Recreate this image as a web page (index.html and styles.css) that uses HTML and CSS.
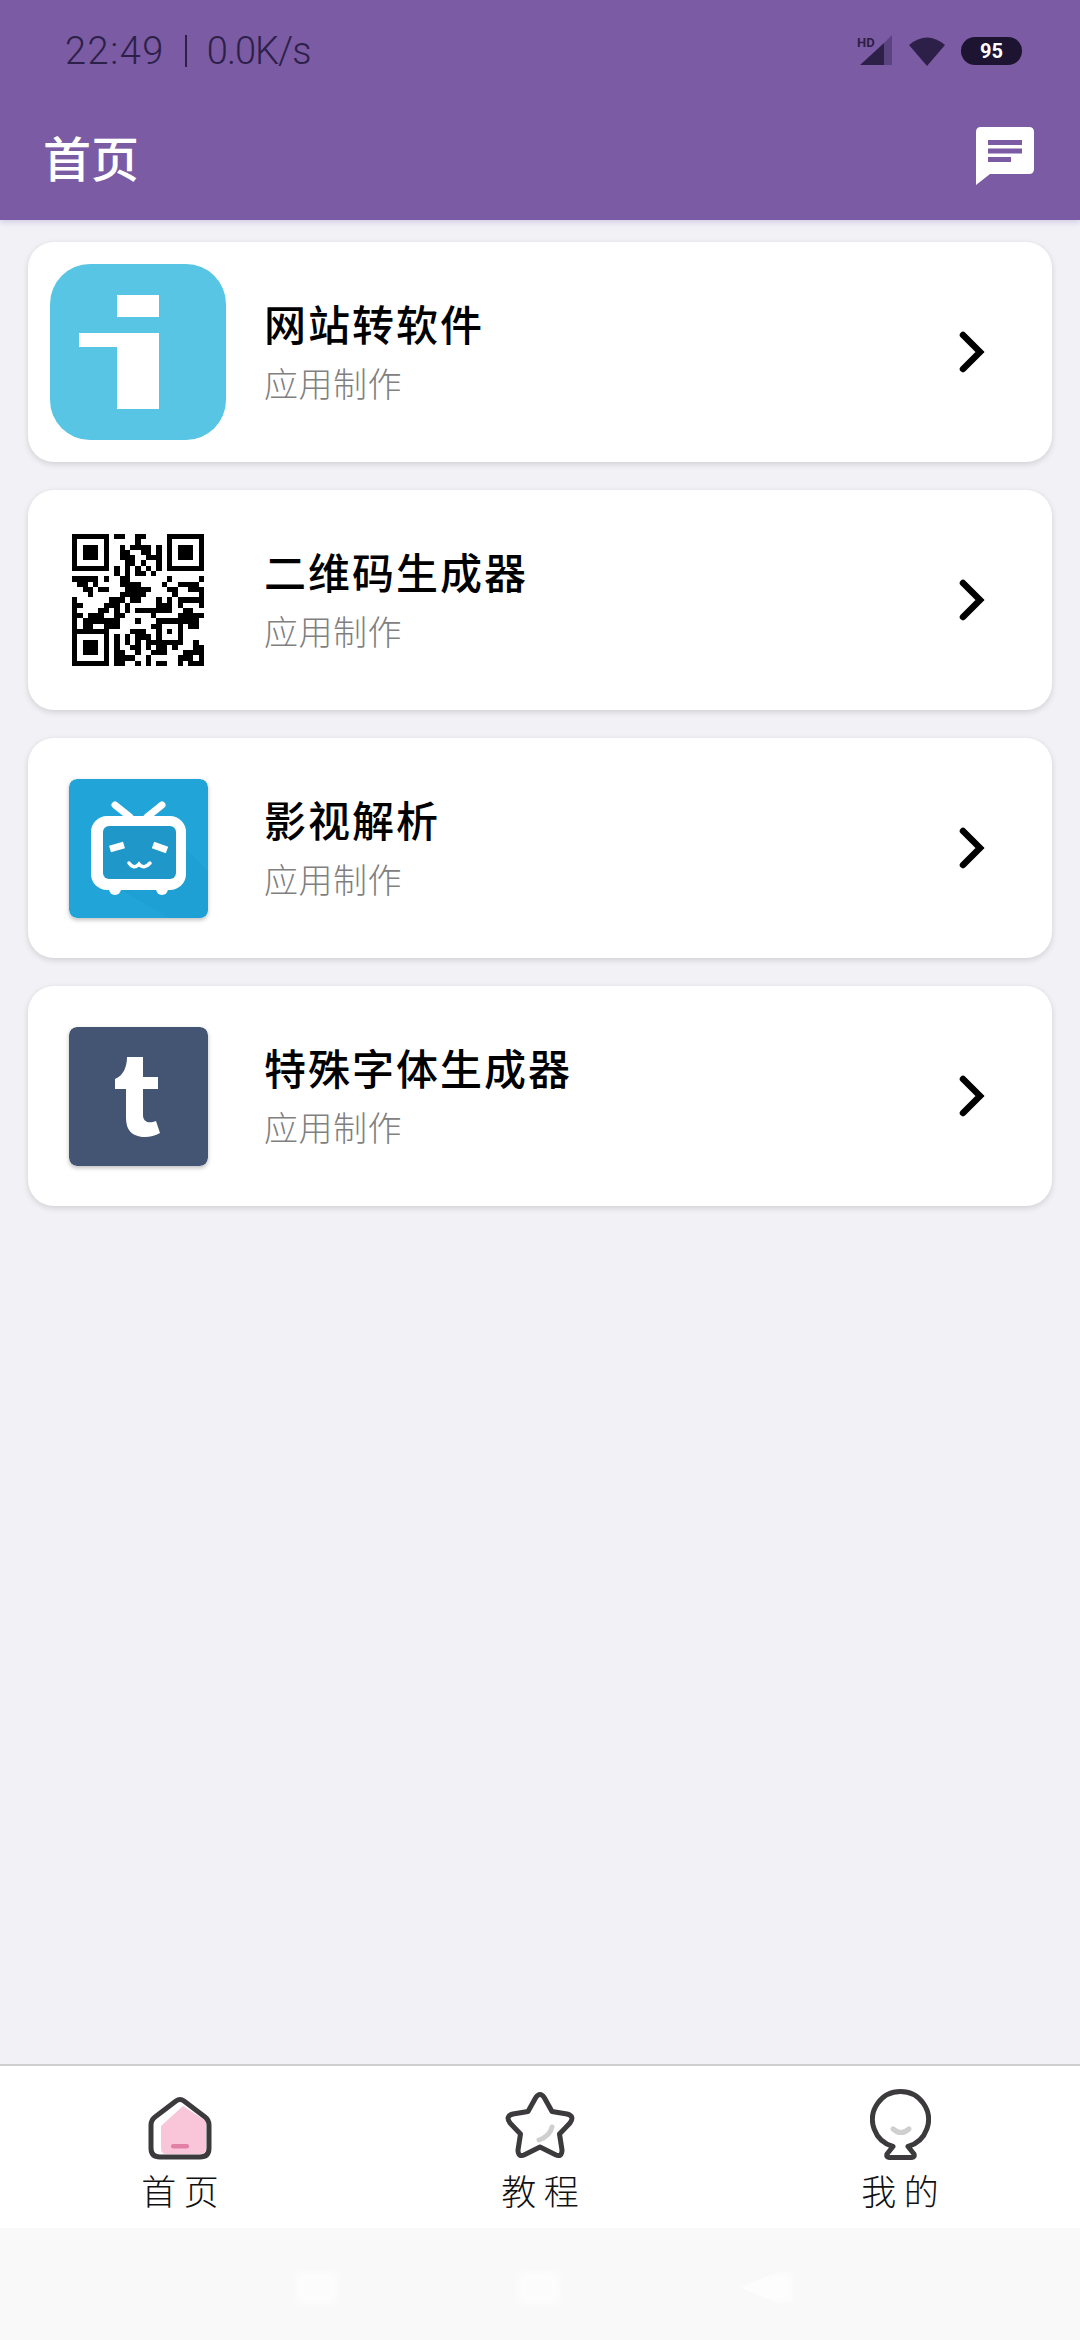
FILE: index.html
```html
<!DOCTYPE html>
<html lang="zh-CN">
<head>
    <meta charset="UTF-8">
    <meta name="viewport" content="width=device-width, initial-scale=1.0">
    <title>首页</title>
    <link rel="stylesheet" href="styles.css">
</head>
<body>
<div class="app">
    <!-- Status bar + title -->
    <header class="header">
        <div class="status-bar">
            <div class="status-text">
                <span>22:49</span>
                <span class="status-sep"></span>
                <span class="status-speed">0.0K/s</span>
            </div>
            <div class="status-icons">
                <svg class="ic-signal" viewBox="0 0 36 32" width="36" height="32">
                    <text x="0" y="11.5" class="hd-text">HD</text>
                    <path d="M3 30 L27 8 V30 Z" fill="#2d2048"/>
                    <path d="M27 8 L35 0 V30 H27 Z" fill="#5a4380"/>
                </svg>
                <svg class="ic-wifi" viewBox="0 0 36 30" width="36" height="30">
                    <path d="M0 9 Q18 -6 36 9 L18 30 Z" fill="#2d2048"/>
                </svg>
                <div class="battery">95</div>
            </div>
        </div>
        <div class="title-bar">
            <h1 class="page-title">首页</h1>
            <svg class="ic-chat" viewBox="0 0 58 58" width="58" height="58">
                <path d="M5 0 H53 Q58 0 58 5 V42 Q58 47 53 47 H14 L0 58 V5 Q0 0 5 0 Z" fill="#fff"/>
                <path d="M12 13 H46 V18 H12 Z M12 21.500 H46 V26.500 H12 Z M12 30 H35 V35 H12 Z" fill="#7a5ba4"/>
            </svg>
        </div>
    </header>

    <main class="list">
        <div class="card">
            <div class="thumb">
                <svg class="icon-big" viewBox="0 0 176 176" width="176" height="176">
                    <rect width="176" height="176" rx="40" fill="#57c5e3"/>
                    <path d="M67 31 H109 V53 H67 Z M29 69 H109 V145 H67 V83 H29 Z" fill="#fff"/>
                </svg>
            </div>
            <div class="card-text">
                <div class="card-title">网站转软件</div>
                <div class="card-sub">应用制作</div>
            </div>
            <svg class="chevron" viewBox="0 0 30 44" width="30" height="44"><path d="M7 5 L24 22 L7 39" /></svg>
        </div>

        <div class="card">
            <div class="thumb">
                <svg class="qr" viewBox="0 0 25 25" width="132" height="132">
                    <path stroke="#000" stroke-width="1" shape-rendering="crispEdges" fill="none" d="M0 .5h7M8 .5h2M12 .5h2M18 .5h7M0 1.500h1M6 1.500h1M12 1.500h1M18 1.500h1M24 1.500h1M0 2.500h1M2 2.500h3M6 2.500h1M9 2.500h1M11 2.500h4M16 2.500h1M18 2.500h1M20 2.500h3M24 2.500h1M0 3.500h1M2 3.500h3M6 3.500h1M9 3.500h2M13 3.500h2M16 3.500h1M18 3.500h1M20 3.500h3M24 3.500h1M0 4.500h1M2 4.500h3M6 4.500h1M9 4.500h3M14 4.500h3M18 4.500h1M20 4.500h3M24 4.500h1M0 5.500h1M6 5.500h1M10 5.500h2M13 5.500h1M16 5.500h1M18 5.500h1M24 5.500h1M0 6.500h7M8 6.500h1M10 6.500h1M12 6.500h1M14 6.500h1M16 6.500h1M18 6.500h7M8 7.500h1M10 7.500h1M12 7.500h2M15 7.500h1M0 8.500h5M6 8.500h1M9 8.500h2M18 8.500h1M24 8.500h1M1 9.500h2M4 9.500h1M9 9.500h4M17 9.500h1M20 9.500h4M2 10.500h2M5 10.500h2M10 10.500h5M18 10.500h2M22 10.500h3M3 11.500h1M9 11.500h5M19 11.500h1M24 11.500h1M0 12.500h1M7 12.500h3M11 12.500h2M16 12.500h1M18 12.500h1M20 12.500h5M0 13.500h2M6 13.500h3M10 13.500h1M16 13.500h3M20 13.500h1M24 13.500h1M0 14.500h1M5 14.500h2M8 14.500h1M10 14.500h1M12 14.500h7M21 14.500h2M0 15.500h2M3 15.500h3M8 15.500h2M15 15.500h1M20 15.500h5M0 16.500h1M2 16.500h7M12 16.500h1M16 16.500h5M21 16.500h3M0 17.500h1M2 17.500h2M6 17.500h3M15 17.500h2M20 17.500h1M22 17.500h2M0 18.500h7M11 18.500h3M16 18.500h1M18 18.500h1M20 18.500h1M0 19.500h1M6 19.500h1M8 19.500h1M10 19.500h1M12 19.500h3M16 19.500h1M20 19.500h1M0 20.500h1M2 20.500h3M6 20.500h1M8 20.500h1M10 20.500h1M12 20.500h1M14 20.500h7M23 20.500h1M0 21.500h1M2 21.500h3M6 21.500h1M8 21.500h1M11 21.500h2M14 21.500h1M16 21.500h2M19 21.500h1M23 21.500h2M0 22.500h1M2 22.500h3M6 22.500h1M8 22.500h2M12 22.500h1M15 22.500h3M21 22.500h4M0 23.500h1M6 23.500h1M8 23.500h3M11 23.500h1M14 23.500h1M20 23.500h3M24 23.500h1M0 24.500h7M8 24.500h2M12 24.500h1M14 24.500h1M16 24.500h2M20 24.500h1M22 24.500h3"/>
                </svg>
            </div>
            <div class="card-text">
                <div class="card-title">二维码生成器</div>
                <div class="card-sub">应用制作</div>
            </div>
            <svg class="chevron" viewBox="0 0 30 44" width="30" height="44"><path d="M7 5 L24 22 L7 39" /></svg>
        </div>

        <div class="card">
            <div class="thumb">
                <svg class="icon-small" viewBox="0 0 139 139" width="139" height="139">
                    <rect width="139" height="139" rx="8" fill="#21a5d9"/>
                    <path d="M107 60 L139 92 V131 Q139 139 131 139 H100 L52 111 Z" fill="#1fa0d4"/>
                    <path d="M46 26 L61 38 M93 26 L78 38" stroke="#fff" stroke-width="7" stroke-linecap="round"/>
                    <circle cx="46" cy="110" r="6" fill="#fff"/>
                    <circle cx="93" cy="110" r="6" fill="#fff"/>
                    <rect x="22" y="37" width="95" height="74" rx="16" fill="#fff"/>
                    <rect x="34" y="47" width="73" height="53" rx="6" fill="#1f97c9"/>
                    <path d="M41 70 L55 66 M84 66 L98 71" stroke="#fff" stroke-width="7"/>
                    <path d="M60 84 Q65 91 70 85 Q75 91 81 84" stroke="#fff" stroke-width="3.500" stroke-linecap="round" fill="none"/>
                </svg>
            </div>
            <div class="card-text">
                <div class="card-title">影视解析</div>
                <div class="card-sub">应用制作</div>
            </div>
            <svg class="chevron" viewBox="0 0 30 44" width="30" height="44"><path d="M7 5 L24 22 L7 39" /></svg>
        </div>

        <div class="card">
            <div class="thumb">
                <svg class="icon-small" viewBox="0 0 139 139" width="139" height="139">
                    <rect width="139" height="139" rx="8" fill="#435573"/>
                    <path d="M58 30 H74 V50 H89 V62 H74 V88 C74 95 80 97 87 94 L91 106 C83 111 72 111 66 108 C59 105 57 98 57 90 V62 H46 V52 C54 49 58 40 58 30 Z" fill="#fff"/>
                </svg>
            </div>
            <div class="card-text">
                <div class="card-title">特殊字体生成器</div>
                <div class="card-sub">应用制作</div>
            </div>
            <svg class="chevron" viewBox="0 0 30 44" width="30" height="44"><path d="M7 5 L24 22 L7 39" /></svg>
        </div>
    </main>

    <!-- Bottom tabs -->
    <nav class="tabs">
        <div class="tab">
            <div class="tab-icon">
                <svg viewBox="0 0 64 64" width="64" height="64">
                    <path d="M13 30 L35 10 L58 25 V52 Q58 58 52 58 H18 Q13 58 13 52 Z" fill="#f8c6d8"/>
                    <rect x="23" y="48" width="18" height="4.500" rx="2.200" fill="#e27fa5"/>
                    <path class="tab-line" d="M28 5 Q32 2 36 5 L57 21 Q61 24 61 29 V52 Q61 61 52 61 H12 Q3 61 3 52 V29 Q3 24 7 21 Z"/>
                </svg>
            </div>
            <div class="tab-label">首 页</div>
        </div>
        <div class="tab">
            <div class="tab-icon">
                <svg viewBox="0 0 72 70" width="72" height="70">
                    <path d="M48 37 Q46 46 35 50" fill="none" stroke="#cfcfcf" stroke-width="5" stroke-linecap="round"/>
                    <path class="tab-line" d="M31.500 8 Q36 1 40.500 8 L48 21.500 L63 24 Q71 26 66 33 L55.500 44 L58 60 Q58 68 51 64.500 L36 57 L21 64.500 Q14 68 14 60 L16.500 44 L6 33 Q1 26 9 24 L24 21.500 Z"/>
                </svg>
            </div>
            <div class="tab-label">教 程</div>
        </div>
        <div class="tab">
            <div class="tab-icon">
                <svg viewBox="0 0 61 71" width="61" height="71">
                    <path d="M23 40 Q31 47 39 40" fill="none" stroke="#cfcfcf" stroke-width="5" stroke-linecap="round"/>
                    <path class="tab-line" d="M23 57.500 A28 28 0 1 1 38 57.500 L44 65 Q45 68.500 42 68.500 H19 Q16 68.500 17 65 Z"/>
                </svg>
            </div>
            <div class="tab-label">我 的</div>
        </div>
    </nav>

    <!-- System nav, almost invisible in the shot -->
    <div class="sys-nav">
        <span class="sys-key"></span>
        <span class="sys-key"></span>
        <span class="sys-key sys-back"></span>
    </div>
</div>
</body>
</html>
```

FILE: styles.css
```css
* {
    box-sizing: border-box;
}
body {
    margin: 0;
    font-family: "Noto Sans CJK SC", Roboto, sans-serif;
    background-color: #f1f1f6;
}
.app {
    display: flex;
    flex-direction: column;
    width: 1080px;
    height: 2340px;
    overflow: hidden;
}

/* Header */
.header {
    height: 220px;
    background-color: #7a5ba4;
    box-shadow: 0 2px 6px rgba(110, 80, 170, 0.25);
    color: #fff;
}
.status-bar {
    display: flex;
    justify-content: space-between;
    align-items: center;
    height: 100px;
    padding: 2px 58px 0 65px;
}
.status-text {
    display: flex;
    align-items: center;
    gap: 20px;
    font-family: Roboto, sans-serif;
    font-size: 38px;
    font-weight: 300;
    letter-spacing: 1.5px;
    color: #2d2048;
}
.status-speed {
    letter-spacing: -1px;
}
.status-sep {
    width: 2px;
    height: 32px;
    background-color: #2d2048;
}
.status-icons {
    display: flex;
    align-items: center;
    gap: 16px;
}
.hd-text {
    font-family: Roboto, sans-serif;
    font-size: 13px;
    font-weight: 700;
    fill: #2d2048;
}
.battery {
    width: 61px;
    height: 28px;
    border-radius: 14px;
    background-color: #1c1430;
    color: #fff;
    font-family: Roboto, sans-serif;
    font-size: 20px;
    font-weight: 700;
    line-height: 28px;
    text-align: center;
}
.title-bar {
    display: flex;
    justify-content: space-between;
    align-items: center;
    height: 120px;
    padding: 0 46px 8px 43px;
}
.page-title {
    margin: 0;
    font-size: 48px;
    font-weight: 500;
    line-height: 60px;
}

/* Cards */
.list {
    flex: 1;
    display: flex;
    flex-direction: column;
    gap: 28px;
    padding: 22px 28px;
}
.card {
    display: flex;
    align-items: center;
    height: 220px;
    padding: 0 66px 0 22px;
    background-color: #fff;
    border-radius: 26px;
    box-shadow: 0 2px 6px rgba(0, 0, 0, 0.14);
}
.thumb {
    display: flex;
    justify-content: center;
    align-items: center;
    width: 176px;
    flex-shrink: 0;
}
.icon-small {
    border-radius: 8px;
    box-shadow: 0 2px 4px rgba(0, 0, 0, 0.25);
}
.card-text {
    flex: 1;
    margin-left: 38px;
    padding-bottom: 2px;
}
.card-title {
    font-size: 42px;
    font-weight: 500;
    letter-spacing: 2px;
    line-height: 52px;
    color: #000;
}
.card-sub {
    margin-top: 12px;
    font-size: 34px;
    font-weight: 300;
    letter-spacing: 0.5px;
    line-height: 44px;
    color: #808080;
}
.chevron path {
    fill: none;
    stroke: #000;
    stroke-width: 6.500px;
    stroke-linecap: round;
}

/* Tabs */
.tabs {
    display: grid;
    grid-template-columns: repeat(3, 1fr);
    height: 164px;
    padding-top: 22px;
    background-color: #fff;
    border-top: 2px solid #cfcfd2;
}
.tab {
    display: flex;
    flex-direction: column;
    align-items: center;
}
.tab-icon {
    display: flex;
    align-items: flex-end;
    height: 72px;
}
.tab-icon svg {
    display: block;
}
.tab-line {
    fill: none;
    stroke: #3d3a3d;
    stroke-width: 5px;
    stroke-linejoin: round;
}
.tab-label {
    margin-top: 10px;
    font-size: 35px;
    font-weight: 300;
    line-height: 40px;
    color: #111;
}

/* System nav */
.sys-nav {
    display: flex;
    align-items: flex-start;
    gap: 181px;
    height: 112px;
    padding: 44px 0 0 296px;
    background-color: #f9f9f9;
}
.sys-key {
    width: 41px;
    height: 31px;
    background-color: #fff;
    opacity: 0.6;
    filter: blur(3px);
}
.sys-back {
    width: 54px;
    clip-path: polygon(0 50%, 70% 0, 100% 0, 100% 100%, 70% 100%);
}
```
